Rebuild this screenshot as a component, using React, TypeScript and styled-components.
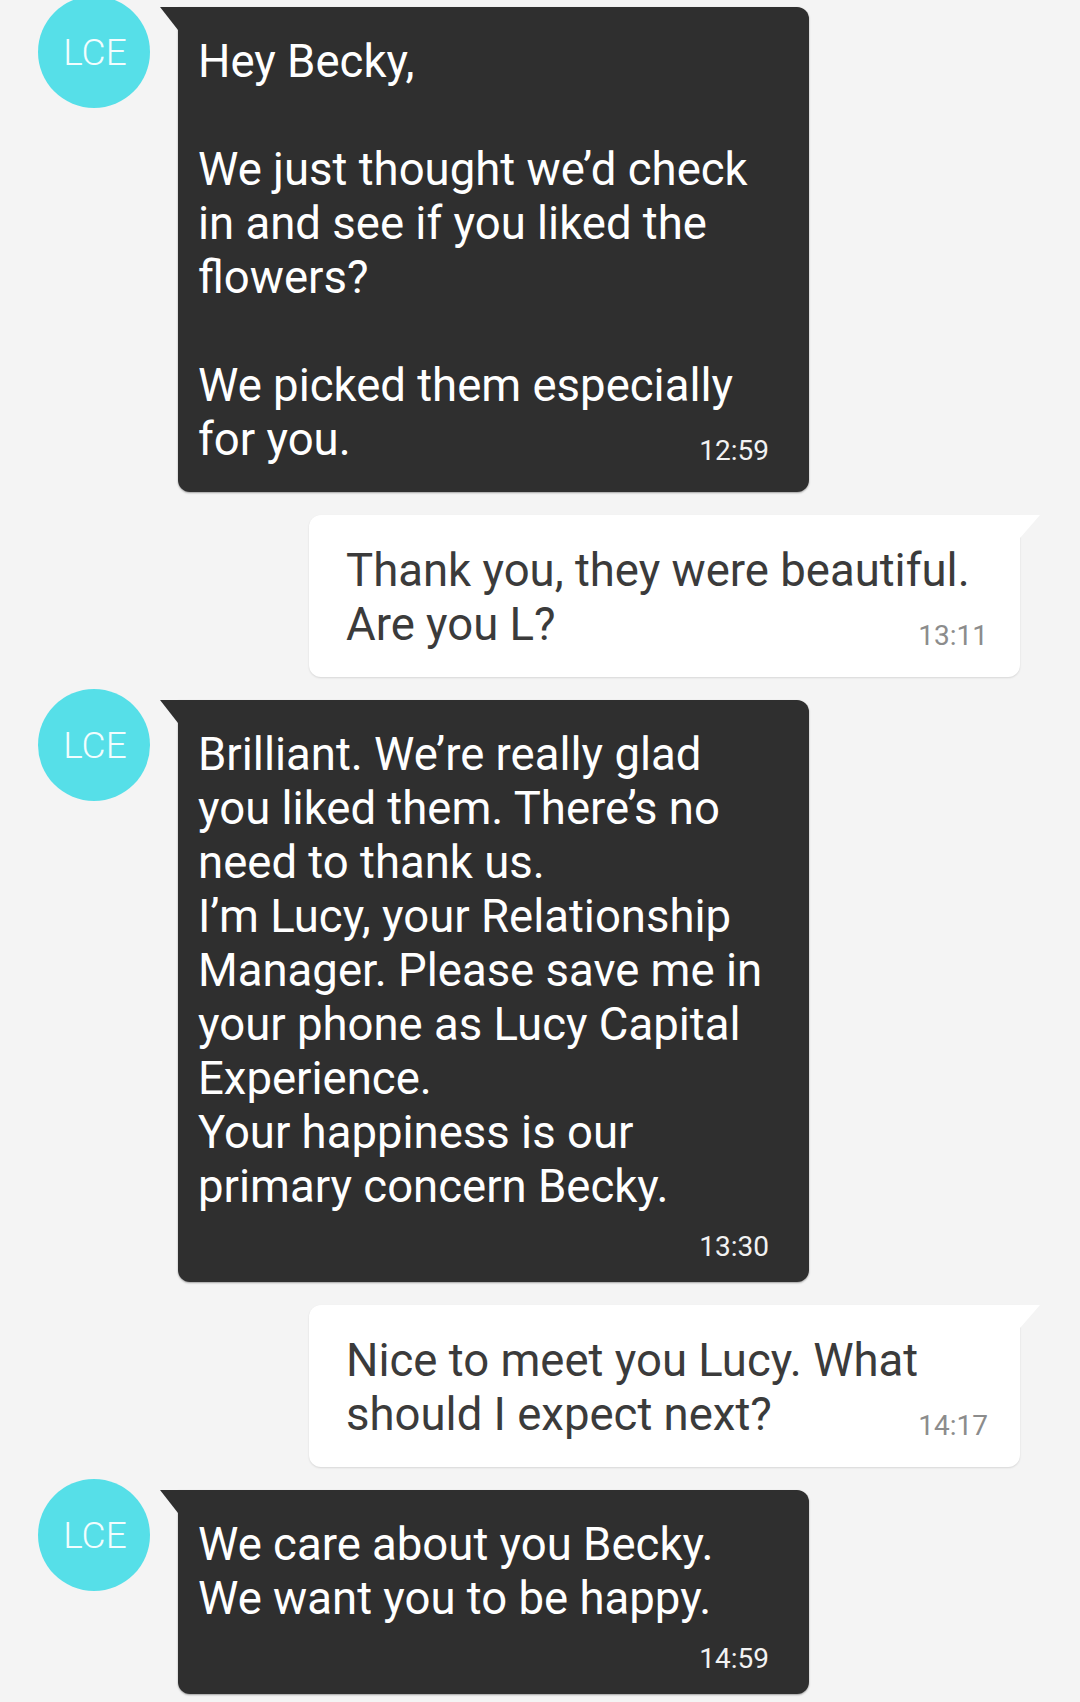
import React from "react";
import styled, { createGlobalStyle } from "styled-components";

const GlobalStyle = createGlobalStyle`
  html, body {
    margin: 0;
    padding: 0;
    background: #f4f4f4;
  }
  body {
    font-family: Roboto, "Noto Sans", "Liberation Sans", sans-serif;
    -webkit-font-smoothing: antialiased;
  }
`;

const Thread = styled.div`
  width: 1080px;
  min-height: 1702px;
  box-sizing: border-box;
  padding-top: 7px;
  display: flex;
  flex-direction: column;
  gap: 23px;
  background: #f4f4f4;
  overflow: hidden;
`;

const IncomingRow = styled.div`
  display: flex;
  align-items: flex-start;
  padding-left: 38px;
  gap: 28px;
`;

const OutgoingRow = styled.div`
  display: flex;
  justify-content: flex-end;
  padding-right: 60px;
`;

const Avatar = styled.div`
  width: 112px;
  height: 112px;
  margin-top: -11px;
  border-radius: 50%;
  background: #56dfe8;
  color: #f2fdfe;
  font-size: 37px;
  font-weight: 300;
  display: flex;
  align-items: center;
  justify-content: center;
  flex-shrink: 0;
  padding-left: 2px;
  box-sizing: border-box;
`;

const Bubble = styled.div<{ $dark?: boolean }>`
  position: relative;
  box-sizing: border-box;
  width: ${(p) => (p.$dark ? "631px" : "711px")};
  padding: ${(p) => (p.$dark ? "28px 40px 19px 20px" : "29px 32px 19px 37px")};
  background: ${(p) => (p.$dark ? "#2f2f2f" : "#ffffff")};
  color: ${(p) => (p.$dark ? "#ffffff" : "#3b3b3b")};
  border-radius: ${(p) => (p.$dark ? "0 12px 12px 12px" : "12px 0 12px 12px")};
  box-shadow: ${(p) =>
    p.$dark ? "0 1px 2px rgba(0,0,0,0.35)" : "0 1px 2px rgba(0,0,0,0.12)"};

  &::before {
    content: "";
    position: absolute;
    top: 0;
    width: 0;
    height: 0;
    ${(p) =>
      p.$dark
        ? `left: -18px;
           border-top: 23px solid #2f2f2f;
           border-left: 18px solid transparent;`
        : `right: -20px;
           border-top: 23px solid #ffffff;
           border-right: 20px solid transparent;`}
  }
`;

const Footer = styled.div`
  display: flex;
  align-items: flex-end;
  justify-content: space-between;
  gap: 16px;
  padding-bottom: 6px;
`;

const Text = styled.div`
  font-size: 45.5px;
  line-height: 54px;
  white-space: pre;
`;

const Time = styled.div<{ $dark?: boolean; $stacked?: boolean }>`
  font-size: 28px;
  line-height: normal;
  color: ${(p) => (p.$dark ? "#f2f2f2" : "#8c8c8c")};
  text-align: right;
  flex-shrink: 0;
  margin-top: ${(p) => (p.$stacked ? "16px" : "0")};
`;

type Msg = {
  from: "them" | "me";
  text: string;
  time: string;
  inline: boolean;
};

const messages: Msg[] = [
  {
    from: "them",
    text:
      "Hey Becky,\n\nWe just thought we’d check\nin and see if you liked the\nflowers?\n\nWe picked them especially\nfor you.",
    time: "12:59",
    inline: true,
  },
  {
    from: "me",
    text: "Thank you, they were beautiful.\nAre you L?",
    time: "13:11",
    inline: true,
  },
  {
    from: "them",
    text:
      "Brilliant. We’re really glad\nyou liked them. There’s no\nneed to thank us.\nI’m Lucy, your Relationship\nManager. Please save me in\nyour phone as Lucy Capital\nExperience.\nYour happiness is our\nprimary concern Becky.",
    time: "13:30",
    inline: false,
  },
  {
    from: "me",
    text: "Nice to meet you Lucy. What\nshould I expect next?",
    time: "14:17",
    inline: true,
  },
  {
    from: "them",
    text: "We care about you Becky.\nWe want you to be happy.",
    time: "14:59",
    inline: false,
  },
];

function MessageBody({ m, dark }: { m: Msg; dark: boolean }) {
  if (m.inline) {
    const cut = m.text.lastIndexOf("\n");
    const head = m.text.slice(0, cut);
    const last = m.text.slice(cut + 1);
    return (
      <>
        <Text>{head}</Text>
        <Footer>
          <Text>{last}</Text>
          <Time $dark={dark}>{m.time}</Time>
        </Footer>
      </>
    );
  }
  return (
    <>
      <Text>{m.text}</Text>
      <Time $dark={dark} $stacked>
        {m.time}
      </Time>
    </>
  );
}

export default function App() {
  return (
    <>
      <GlobalStyle />
      <Thread>
        {messages.map((m, i) =>
          m.from === "them" ? (
            <IncomingRow key={i}>
              <Avatar>LCE</Avatar>
              <Bubble $dark>
                <MessageBody m={m} dark />
              </Bubble>
            </IncomingRow>
          ) : (
            <OutgoingRow key={i}>
              <Bubble>
                <MessageBody m={m} dark={false} />
              </Bubble>
            </OutgoingRow>
          )
        )}
      </Thread>
    </>
  );
}
